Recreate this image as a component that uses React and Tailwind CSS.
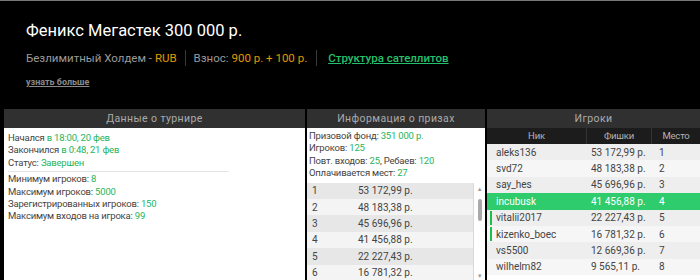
const prizes = [
  ['1', '53 172,99 р.'],
  ['2', '48 183,38 р.'],
  ['3', '45 696,96 р.'],
  ['4', '41 456,88 р.'],
  ['5', '22 227,43 р.'],
  ['6', '16 781,32 р.'],
]

const players = [
  { nick: 'aleks136', chips: '53 172,99 р.', place: '1' },
  { nick: 'svd72', chips: '48 183,38 р.', place: '2' },
  { nick: 'say_hes', chips: '45 696,96 р.', place: '3' },
  { nick: 'incubusk', chips: '41 456,88 р.', place: '4', me: true },
  { nick: 'vitalii2017', chips: '22 227,43 р.', place: '5', mark: true },
  { nick: 'kizenko_boec', chips: '16 781,32 р.', place: '6', mark: true },
  { nick: 'vs5500', chips: '12 669,36 р.', place: '7' },
  { nick: 'wilhelm82', chips: '9 565,11 р.', place: '8' },
]

function PanelHeader({ children }) {
  return (
    <div className="h-[19px] shrink-0 bg-[#303030] text-[#ababab] text-[10.5px] flex items-center justify-center tracking-[0.4px]">
      {children}
    </div>
  )
}

function Line({ label, value }) {
  return (
    <div className="h-[12.4px] leading-[12.4px]">
      {label} <span className="text-[#1fb45a]">{value}</span>
    </div>
  )
}

export default function App() {
  return (
    <div
      className="w-[700px] h-[280px] bg-black border-t border-[#777] overflow-hidden"
      style={{ fontFamily: 'Roboto, "Liberation Sans", sans-serif' }}
    >
      <div className="pl-[26px] pt-[19px] h-[108px]">
        <h1 className="text-white text-[16.5px] leading-[22px]">Феникс Мегастек 300 000 р.</h1>
        <div className="mt-[8px] flex items-center text-[11.5px] leading-[16px] text-[#9a9a9a]">
          <span>
            Безлимитный Холдем - <span className="text-[#e09a00]">RUB</span>
          </span>
          <span className="mx-[8px] w-px h-[16px] bg-[#3a3a3a]" />
          <span>
            Взнос: <span className="text-[#e09a00]">900 р. + 100 р.</span>
          </span>
          <span className="mx-[9px] w-px h-[16px] bg-[#3a3a3a]" />
          <span className="ml-[2px] text-[#25c06a] underline font-medium">Структура сателлитов</span>
        </div>
        <div className="mt-[10px] text-[9px] font-bold text-[#8a8a8a] underline leading-[12px]">
          узнать больше
        </div>
      </div>

      <div className="flex gap-[2px] pl-[4px] text-[9.5px] tracking-[-0.2px] text-[#444]">
        <div className="w-[301px] h-[172px] bg-white flex flex-col">
          <PanelHeader>Данные о турнире</PanelHeader>
          <div className="px-[4px] pt-[4px]">
            <Line label="Начался" value="в 18:00, 20 фев" />
            <Line label="Закончился" value="в 0:48, 21 фев" />
            <Line label="Статус:" value="Завершен" />
            <div className="mt-[2px] mb-[1px] w-[221px] h-px bg-[#e4e4e4]" />
            <Line label="Минимум игроков:" value="8" />
            <Line label="Максимум игроков:" value="5000" />
            <Line label="Зарегистрированных игроков:" value="150" />
            <Line label="Максимум входов на игрока:" value="99" />
          </div>
        </div>

        <div className="w-[178px] h-[172px] bg-white flex flex-col">
          <PanelHeader>Информация о призах</PanelHeader>
          <div className="px-[2px] pt-[2px] pb-[3px]">
            <Line label="Призовой фонд:" value="351 000 р." />
            <Line label="Игроков:" value="125" />
            <div className="h-[12.4px] leading-[12.4px]">
              Повт. входов: <span className="text-[#1fb45a]">25</span>, Ребаев:{' '}
              <span className="text-[#1fb45a]">120</span>
            </div>
            <Line label="Оплачивается мест:" value="27" />
          </div>
          <div className="flex flex-1 min-h-0">
            <div className="flex-1 overflow-hidden">
              {prizes.map(([p, v], i) => (
                <div
                  key={p}
                  className={`h-[16.4px] flex items-center text-[10px] tracking-normal ${i % 2 === 0 ? 'bg-[#e7e7e7]' : 'bg-[#f4f4f4]'}`}
                >
                  <span className="w-[51px] shrink-0 pl-[5px]">{p}</span>
                  <span className="shrink-0">{v}</span>
                </div>
              ))}
            </div>
            <div className="w-[12px] shrink-0 bg-white border-l border-[#d8d8d8] flex flex-col items-center">
              <div className="h-[12px] flex items-center justify-center text-[#9a9a9a] text-[6px]">▲</div>
              <div className="mt-[4px] w-[4px] h-[22px] rounded-full bg-[#a9a9a9]" />
              <div className="flex-1" />
              <div className="h-[12px] flex items-center justify-center text-[#9a9a9a] text-[6px]">▼</div>
            </div>
          </div>
        </div>

        <div className="w-[213px] h-[172px] bg-white flex flex-col">
          <PanelHeader>Игроки</PanelHeader>
          <div className="h-[16px] shrink-0 bg-[#1c1c1c] flex text-[#b4b4b4] text-[9.5px]">
            <div className="w-[100px] flex items-center justify-center border-r border-[#333]">Ник</div>
            <div className="w-[65px] flex items-center justify-center border-r border-[#333]">Фишки</div>
            <div className="flex-1 flex items-center justify-center">Место</div>
          </div>
          {players.map((pl, i) => (
            <div
              key={pl.nick}
              className={`relative h-[16.4px] shrink-0 flex items-center text-[10px] tracking-normal ${
                pl.me ? 'bg-[#2fcc6e] text-white' : i % 2 === 0 ? 'bg-[#eeeeee]' : 'bg-[#f6f6f6]'
              }`}
            >
              {pl.mark && <span className="absolute left-[3px] top-[1px] bottom-[1px] w-[2px] bg-[#19c04e]" />}
              <span className="w-[104px] shrink-0 pl-[9px]">{pl.nick}</span>
              <span className="w-[68px] shrink-0">{pl.chips}</span>
              <span>{pl.place}</span>
            </div>
          ))}
        </div>
      </div>
    </div>
  )
}
